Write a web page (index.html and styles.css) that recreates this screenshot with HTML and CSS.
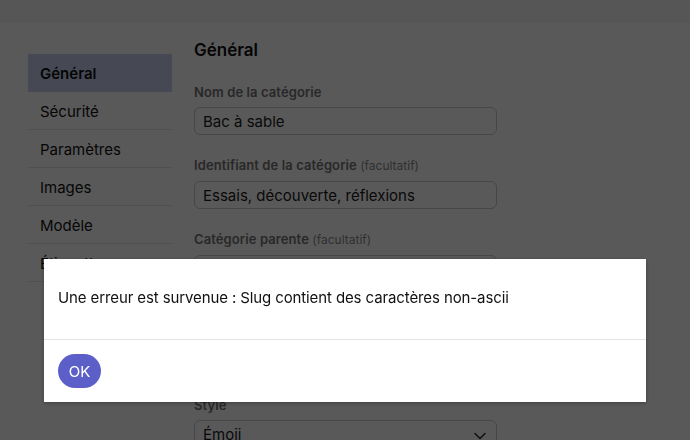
FILE: index.html
```html
<!DOCTYPE html>
<html lang="fr">
<head>
<meta charset="utf-8">
<title>Catégorie</title>
<link rel="stylesheet" href="styles.css">
</head>
<body>
<header class="topbar"></header>
<div class="layout">
  <nav class="sidebar">
    <a class="nav-item active">Général</a>
    <a class="nav-item">Sécurité</a>
    <a class="nav-item">Paramètres</a>
    <a class="nav-item">Images</a>
    <a class="nav-item">Modèle</a>
    <a class="nav-item">Étiquettes</a>
  </nav>
  <main class="main">
    <h2 class="title">Général</h2>
    <div class="field">
      <label class="label">Nom de la catégorie</label>
      <div class="input">Bac à sable</div>
    </div>
    <div class="field">
      <label class="label">Identifiant de la catégorie <span class="opt">(facultatif)</span></label>
      <div class="input">Essais, découverte, réflexions</div>
    </div>
    <div class="field tall">
      <label class="label">Catégorie parente <span class="opt">(facultatif)</span></label>
      <div class="input select"></div>
    </div>
    <div class="field">
      <label class="label">Style</label>
      <div class="input select">Émoji
        <svg class="chev" width="12" height="8" viewBox="0 0 12 8"><path d="M1 1.5 6 6.5 11 1.5" fill="none" stroke="#333" stroke-width="1.6" stroke-linecap="round" stroke-linejoin="round"/></svg>
      </div>
    </div>
  </main>
</div>
<div class="overlay">
  <div class="modal">
    <div class="modal-body">Une erreur est survenue : Slug contient des caractères non-ascii</div>
    <div class="modal-footer"><button class="btn">OK</button></div>
  </div>
</div>
</body>
</html>
```

FILE: styles.css
```css
* { box-sizing: border-box; }
html, body { margin: 0; padding: 0; }
body {
  font-family: Inter, "Noto Sans", sans-serif;
  background: #ffffff;
  color: #111;
  width: 690px;
  height: 440px;
  overflow: hidden;
}
.topbar {
  height: 23px;
  background: #f6f6f6;
}
.layout {
  display: flex;
  gap: 22px;
  padding: 17px 28px 0 28px;
}
.sidebar {
  width: 144px;
  margin-top: 14px;
  display: flex;
  flex-direction: column;
}
.nav-item {
  display: block;
  height: 38px;
  line-height: 39px;
  padding-left: 12px;
  font-size: 15px;
  color: #111;
  border-bottom: 1px solid #e6e6e6;
}
.nav-item.active {
  background: #c9d2ee;
  font-weight: 600;
  border-bottom: none;
}
.main {
  width: 303px;
}
.title {
  margin: 0 0 24px 0;
  font-size: 17px;
  line-height: 20px;
  font-weight: 600;
}
.field { margin-bottom: 22px; }
.field.tall { margin-bottom: 114px; }
.label {
  display: block;
  font-size: 13px;
  line-height: 16px;
  font-weight: 600;
  color: #747474;
  margin-bottom: 7px;
  letter-spacing: 0.1px;
}
.opt {
  font-size: 12px;
  font-weight: 400;
  color: #8a8a8a;
  letter-spacing: 0;
}
.input {
  position: relative;
  height: 28px;
  border: 1px solid #c9c9c9;
  border-radius: 6px;
  padding: 0 8px;
  font-size: 15px;
  line-height: 27px;
  color: #1a1a1a;
  background: #fff;
}
.chev {
  position: absolute;
  right: 10px;
  top: 11px;
}
.overlay {
  position: fixed;
  inset: 0;
  background: rgba(0, 0, 0, 0.65);
  display: flex;
  justify-content: center;
  align-items: flex-start;
  padding-top: 259px;
}
.modal {
  width: 602px;
  background: #fff;
  box-shadow: 0 1px 4px rgba(0,0,0,0.3);
}
.modal-body {
  height: 81px;
  padding: 29px 14px 0 14px;
  font-size: 15px;
  line-height: 20px;
  letter-spacing: -0.11px;
  color: #111;
  border-bottom: 1px solid #e3e3e3;
}
.modal-footer {
  height: 62px;
  padding: 14px 14px;
}
.btn {
  width: 43px;
  height: 34px;
  border: none;
  border-radius: 17px;
  background: #5b5fc7;
  color: #fff;
  font-family: Inter, "Noto Sans", sans-serif;
  font-size: 15px;
  padding: 0;
}
```
